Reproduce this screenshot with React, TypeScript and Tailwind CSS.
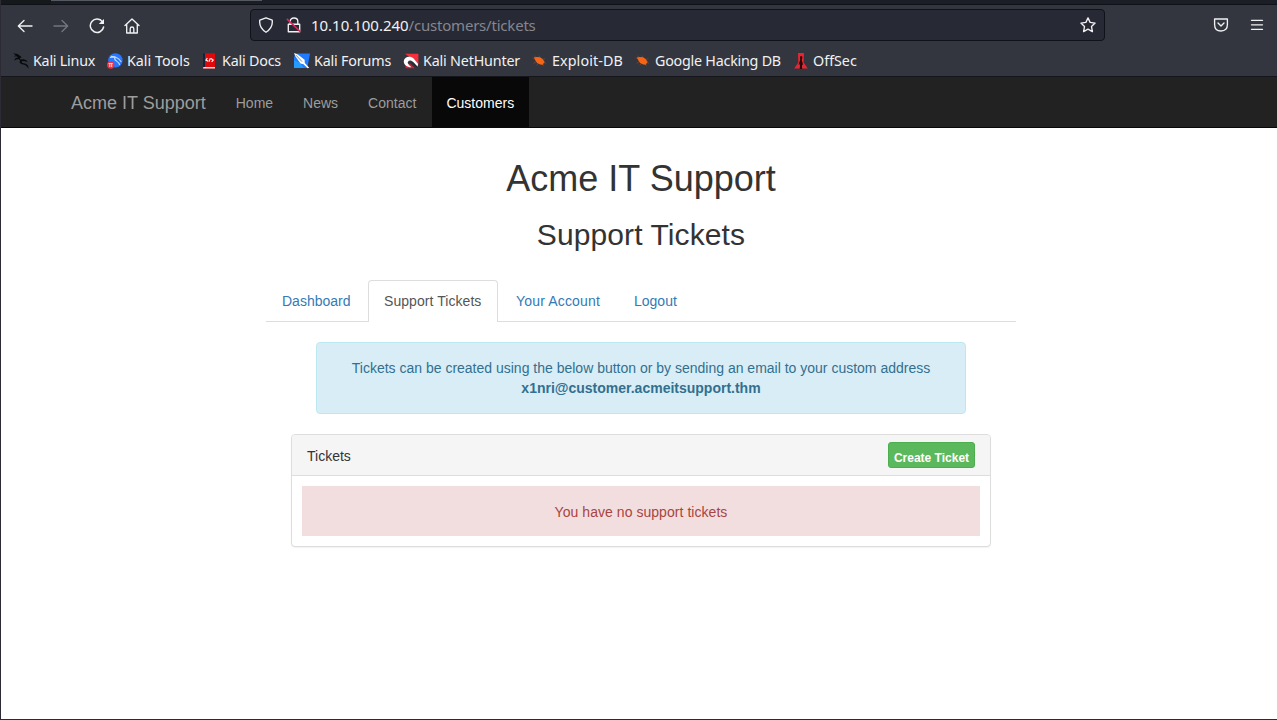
import type { ReactNode } from 'react';

const stroke = {
  fill: 'none',
  stroke: 'currentColor',
  strokeWidth: 1.35,
  strokeLinecap: 'round',
  strokeLinejoin: 'round',
} as const;

function Icon({ children, className = '' }: { children: ReactNode; className?: string }) {
  return (
    <svg viewBox="0 0 16 16" className={`block size-4 shrink-0 ${className}`}>
      {children}
    </svg>
  );
}

const dragon = (
  <Icon>
    <path d="M0 .3 4.5 1.1 7.6 3.2 8.6 4.6 6.9 5.1 7.3 6.4 10.6 6.2 13.4 7.3 14.6 9.2 12.4 8.2 9.6 8.1 8.4 9 9.6 9.9 12.9 10.7 15 12.6 15.6 15.8 13.8 13.5 12 12.1 8.2 11.1 6.5 9.4 7 7.5 5.8 6.1 3.2 6.4 1 7.7 2.4 5.3 5.2 4.3 3.4 3.2.6 3.6 2.7 2.2Z" fill="#090a0c" />
  </Icon>
);

const tools = (
  <Icon>
    <circle cx="8.4" cy="7.4" r="7.2" fill="#2777ff" />
    <path d="M3 4.4 8.4 4 12 6.1 14.3 9M8 4.5C6 8 11.5 7.2 12.7 12M4 3.2 8.1 4" fill="none" stroke="#c6dbff" strokeWidth="1.1" />
    <circle cx="3.7" cy="12" r="3.7" fill="#ef3340" />
    <path d="M1.6 10.5H5.8M2.8 10.5V14M4.7 10.5V14" fill="none" stroke="#fff" strokeWidth=".8" />
  </Icon>
);

const docs = (
  <Icon>
    <path d="M1 .3H13V15.4H1Z" fill="#df080b" />
    <path d="M1 .3H3V13.6L1 15Z" fill="#13233c" />
    <path d="M1.4 14H13V15.6H1Z" fill="#f5d8d8" />
    <path d="M5.4 5.2 3.9 7 6.1 8.3M9.6 8.8 11.2 7 9 5.5M8.4 5.2 6.9 8.8" fill="none" stroke="#fff" strokeWidth="1.1" />
  </Icon>
);

const forums = (
  <Icon>
    <path d="M1 .5H16L13.3 15H0V5Z" fill="#207bff" />
    <path d="M0 7 6 10 10 15H0Z" fill="#249bff" />
    <path d="M0 0 3.8 1.5 10.6 6.8 10.8 10 15.2 14.8 13.6 15.2 9.5 11.3 6.5 10.5 1.5 3.6Z" fill="#fff" />
    <path d="M2 2.2 8 8.6" stroke="#243e69" strokeWidth=".6" />
  </Icon>
);

const nethunter = (
  <Icon>
    <path d="M2 .7H15.4V11.5L12 8Z" fill="#f5303c" />
    <path d="M2.3 10.5 7 10.8 11.8 15.3H2.5Z" fill="#d51d30" />
    <path d="M14.5 13.8 10.5 9.4C8.4 7.2 6 7.1 5 8.7 4.1 10.3 5.7 11.5 8.4 14.2 4.2 14.3.4 11.5.8 7.9 1.2 4 7.1 2.1 10.8 5.8L15.1 11Z" fill="#fff" />
    <path d="M10.5 9.4 14.5 13.8 13.6 14.4 8.5 9.8 5.6 9.2Z" fill="#24262d" />
  </Icon>
);

const bug = (
  <Icon>
    <path d="M.7 4.8 4.2 6M2.2 2.8 5.3 5M7 2.5 8 5M1.5 10.3 4.5 8.8M4.5 12.2 6.8 10.3M11 6.5 13.3 5.7M11.6 9.5 14 10.4M10 11 11.7 12.9" stroke="#7d4632" strokeWidth=".7" />
    <path d="M1.8 4.4 4.6 4.1 8 4.3 10.4 5.7 12.7 9.1 11.4 10.5 11.1 11.8 8.3 11.4 5.1 9.9 3.4 7.6Z" fill="#f66516" />
  </Icon>
);

const offsec = (
  <Icon>
    <path d="M5 0H11L10.6 9.4 14.8 15.6H1.2L5.3 9.4Z" fill="#e82530" />
    <path d="M7 3.4 8.5 3 9.5 4 8.7 7 10 11.4 9 12 9.1 16H6.8L7 11.3 5.5 11.8 7.2 7Z" fill="#26070b" />
  </Icon>
);

const bookmarks = [
  { label: 'Kali Linux', icon: dragon, width: 'w-[62px] tracking-[-0.23px]' },
  { label: 'Kali Tools', icon: tools, width: 'w-[63px]' },
  { label: 'Kali Docs', icon: docs, width: 'w-[60px] tracking-[-0.2px]' },
  { label: 'Kali Forums', icon: forums, width: 'w-[77px] tracking-[-0.17px]' },
  { label: 'Kali NetHunter', icon: nethunter, width: 'w-[97px] tracking-[-0.17px]' },
  { label: 'Exploit-DB', icon: bug, width: 'w-[71px] tracking-[0.1px]' },
  { label: 'Google Hacking DB', icon: bug, width: 'w-[126px] tracking-[-0.23px]' },
  { label: 'OffSec', icon: offsec, width: 'w-[44px]' },
];

function Browser() {
  return (
    <header className="flex h-[77px] shrink-0 flex-col border-b border-[#14161b] bg-[#33363e] font-['Noto_Sans',sans-serif] text-[#f1f1f3]">
      <div className="flex h-[5px] border-b border-[#101218] bg-[#1b1e27]">
        <div className="h-full w-[50px] bg-[#15191b]" />
        <div className="h-px w-[211px] bg-[#555962]" />
      </div>
      <div className="flex h-10 items-center pl-4">
        <div className="flex w-[233px] items-center gap-5 pt-px">
          <Icon><path {...stroke} d="M15 8H1.5M7 2.5 1.3 8 7 13.5" /></Icon>
          <Icon className="text-[#74767d]"><path {...stroke} d="M1 8H14.5M9 2.5 14.7 8 9 13.5" /></Icon>
          <Icon>
            <path {...stroke} strokeWidth="1.5" d="M13.5 3.9A6.7 6.7 0 1 0 14.6 9" />
            <path d="M15 1V6.1H9.8Z" fill="currentColor" />
          </Icon>
          <Icon className="-ml-px"><path {...stroke} d="M1 7.6 8 .9 15 7.6M2.7 6.3V15H13.3V6.3M6.2 15V10.7Q6.2 9 8 9T9.8 10.7V15" /></Icon>
        </div>
        <div className="flex h-8 w-[855px] items-center rounded border border-[#101219] bg-[#272a35] pr-2 pl-[7px]">
          <Icon><path {...stroke} d="M8 .8 14.2 3.2Q15.2 10.5 8 15.2.8 10.5 1.8 3.2Z" /></Icon>
          <Icon className="ml-3">
            <path {...stroke} d="M2.3 7.2H13.7V14.7H2.3ZM4.2 7V4.5Q4.2 1 8 1T11.8 4.5V7" />
            <path d="M.8 1.8 14.7 15" stroke="#e52059" strokeWidth="1.7" />
          </Icon>
          <div className="ml-[9px] text-[15px] leading-8 tracking-[-0.02px]">
            10.10.100.240<span className="tracking-[-0.21px] text-[#85868f]">/customers/tickets</span>
          </div>
          <Icon className="ml-auto"><path {...stroke} d="m8 .9 2.1 4.5 5 .7-3.6 3.5.9 5L8 12.2l-4.4 2.4.9-5L.9 6.1l5-.7Z" /></Icon>
        </div>
        <Icon className="ml-auto"><path {...stroke} d="M1.6 2H14.4V7.5Q14.4 14 8 14T1.6 7.5ZM5 6 8 9 11 6" /></Icon>
        <Icon className="mr-3 ml-5"><path {...stroke} d="M2.5 3.3H13.5M2.5 7.8H13.5M2.5 12.3H13.5" /></Icon>
      </div>
      <div className="mt-px flex h-[30px] items-center gap-3 pl-3 text-[14.3px] leading-[30px]">
        {bookmarks.map(({ label, icon, width }) => (
          <div key={label} className="flex items-center gap-1">
            {icon}
            <span className={`${width} whitespace-nowrap`}>{label}</span>
          </div>
        ))}
      </div>
    </header>
  );
}

function SiteNav() {
  return (
    <nav className="flex h-[51px] shrink-0 items-center border-b border-[#080808] bg-[#222] pl-[55px] text-[#9d9d9d]">
      <a className="px-[15px] pt-0.5 text-lg leading-5">Acme IT Support</a>
      {['Home', 'News', 'Contact'].map((item) => (
        <a key={item} className="px-[15px] pt-0.5 leading-5">{item}</a>
      ))}
      <a className="ml-[0.6px] flex h-[50px] items-center bg-[#080808] px-[14.5px] pt-0.5 leading-5 text-white">Customers</a>
    </nav>
  );
}

export default function App() {
  return (
    <div className="flex h-[720px] w-[1277px] flex-col overflow-hidden border-b border-l border-[#2b2a35] bg-white font-['Liberation_Sans',Arial,sans-serif] text-sm leading-5 text-[#333]">
      <Browser />
      <SiteNav />
      <main className="ml-[265px] w-[750px] pt-[31px]">
        <h1 className="text-center text-[36px] leading-10">Acme IT Support</h1>
        <h2 className="mt-[19px] text-center text-[30px] leading-[33px] tracking-[0.1px]">Support Tickets</h2>
        <div className="mt-[29px] flex h-[42px] border-b border-[#ddd] whitespace-nowrap text-[#337ab7]">
          <a className="mr-0.5 h-[42px] w-[100px] pt-[11px] pl-4">Dashboard</a>
          <a className="mr-0.5 h-[42px] w-[130px] rounded-t border border-b-0 border-[#ddd] bg-white pt-2.5 pl-[15px] tracking-[0.06px] text-[#555]">Support Tickets</a>
          <a className="mr-0.5 h-[42px] w-[116px] pt-[11px] pl-4 tracking-[0.17px]">Your Account</a>
          <a className="h-[42px] px-4 py-[11px]">Logout</a>
        </div>
        <div className="mx-auto mt-5 h-[72px] w-[650px] rounded border border-[#bce8f1] bg-[#d9edf7] pt-[15px] text-center text-[#31708f]">
          <p>Tickets can be created using the below button or by sending an email to your custom address</p>
          <p className="font-bold">x1nri@customer.acmeitsupport.thm</p>
        </div>
        <section className="mx-auto mt-5 h-[113px] w-[700px] rounded border border-[#ddd] bg-white shadow-[0_1px_1px_rgba(0,0,0,0.05)]">
          <div className="flex h-[41px] items-center justify-between rounded-t-[3px] border-b border-[#ddd] bg-[#f5f5f5] px-[15px]">
            <h3 className="pt-0.5">Tickets</h3>
            <button className="flex h-[26px] w-[87px] items-center justify-center rounded-[3px] border border-[#4cae4c] bg-[#5cb85c] pt-[5px] text-xs font-bold whitespace-nowrap text-white">
              Create Ticket
            </button>
          </div>
          <div className="m-2.5 flex h-[50px] items-center justify-center bg-[#f2dede] pt-0.5 tracking-[0.05px] text-[#a94442]">
            You have no support tickets
          </div>
        </section>
      </main>
    </div>
  );
}
